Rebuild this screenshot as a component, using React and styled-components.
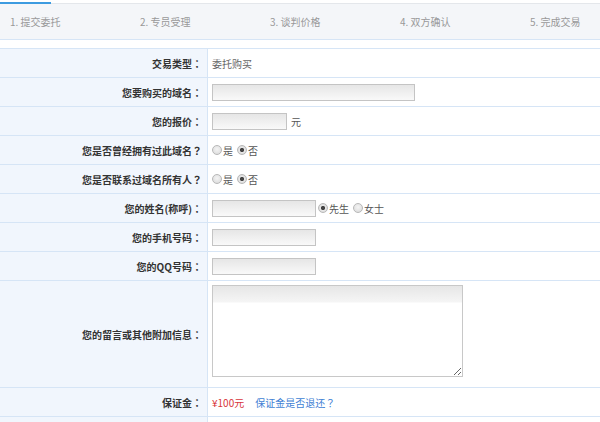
import React from "react";
import styled, { createGlobalStyle } from "styled-components";

const Global = createGlobalStyle`
  html, body { margin: 0; padding: 0; background: #fff; }
  body {
    font-family: "Noto Sans CJK SC", "Microsoft YaHei", sans-serif;
    font-size: 10px;
    color: #333;
    width: 600px;
    overflow: hidden;
  }
`;

const StepBar = styled.div`
  position: relative;
  margin-top: 3px;
  border-top: 1px solid #e4e7eb;
  border-bottom: 1px solid #d6e5f6;
  background: #f4f6f9;
  height: 35px;
  display: flex;
  align-items: center;
`;

const Step = styled.div`
  position: relative;
  width: 130px;
  flex: none;
  padding-left: 10px;
  box-sizing: border-box;
  color: #999;
  font-size: 10px;
  line-height: 14px;
`;

const ActiveMark = styled.span`
  position: absolute;
  left: 0;
  top: -13px;
  width: 51px;
  height: 2px;
  background: #3d9be0;
`;

const Form = styled.div`
  margin-top: 8px;
  border-top: 1px solid #d6e5f6;
`;

const Row = styled.div`
  display: flex;
  height: ${(p) => p.$h || 28}px;
  border-bottom: 1px solid #d6e5f6;
`;

const Label = styled.div`
  width: 208px;
  flex: none;
  box-sizing: border-box;
  background: #f1f6fd;
  border-right: 1px solid #d6e5f6;
  display: flex;
  align-items: center;
  justify-content: flex-end;
  padding-right: 5px;
  font-weight: bold;
  color: #333;
  font-size: 10px;
`;

const Punct = styled.span`
  font-family: "Noto Sans CJK TC", "Noto Sans CJK SC", sans-serif;
`;

const Value = styled.div`
  flex: 1;
  display: flex;
  align-items: ${(p) => (p.$top ? "flex-start" : "center")};
  padding-left: 4px;
  padding-top: ${(p) => (p.$top ? 4 : 0)}px;
  color: #666;
  font-size: 10px;
`;

const Input = styled.input`
  width: ${(p) => p.$w}px;
  height: 17px;
  box-sizing: border-box;
  border: 1px solid #c4c4c4;
  background: linear-gradient(#e6e6e6, #f9f9f9);
  margin: 0;
  padding: 0 3px;
  outline: none;
  font-family: inherit;
  font-size: 10px;
`;

const TextArea = styled.textarea`
  width: 251px;
  height: 92px;
  box-sizing: border-box;
  border: 1px solid #c8c8c8;
  background: linear-gradient(#e6e6e6, #f5f5f5 16px, #fff 17px, #fff);
  margin: 0;
  padding: 2px;
  outline: none;
  font-family: inherit;
  font-size: 10px;
  resize: both;
`;

const Unit = styled.span`
  margin-left: 4px;
  color: #555;
`;

const RadioGroup = styled.label`
  display: inline-flex;
  align-items: center;
  margin-right: ${(p) => p.$gap ?? 4}px;
  margin-left: ${(p) => p.$ml ?? 0}px;
  color: #555;
`;

const Radio = styled.input.attrs({ type: "radio" })`
  appearance: none;
  -webkit-appearance: none;
  width: 10px;
  height: 10px;
  margin: 0 1px 0 0;
  border-radius: 50%;
  border: 1px solid #b8b8b8;
  background: radial-gradient(circle at 50% 40%, #f4f4f4, #d8d8d8);
  box-sizing: border-box;
  &:checked {
    background: radial-gradient(circle, #444 0 1.8px, #e8e8e8 2.4px, #d2d2d2);
  }
`;

const Price = styled.span`
  color: #d8363b;
  margin-right: 11px;
`;

const Link = styled.a`
  color: #3f7fd4;
  text-decoration: none;
`;

const steps = ["1. 提交委托", "2. 专员受理", "3. 谈判价格", "4. 双方确认", "5. 完成交易"];

function YesNo({ name }) {
  return (
    <>
      <RadioGroup>
        <Radio name={name} />是
      </RadioGroup>
      <RadioGroup>
        <Radio name={name} defaultChecked />否
      </RadioGroup>
    </>
  );
}

function L({ text, p = "：" }) {
  return (
    <Label>
      {text}
      <Punct>{p}</Punct>
    </Label>
  );
}

export default function App() {
  return (
    <>
      <Global />
      <StepBar>
        {steps.map((s, i) => (
          <Step key={s}>
            {i === 0 && <ActiveMark />}
            {s}
          </Step>
        ))}
      </StepBar>
      <Form>
        <Row>
          <L text="交易类型" />
          <Value>委托购买</Value>
        </Row>
        <Row>
          <L text="您要购买的域名" />
          <Value>
            <Input $w={203} />
          </Value>
        </Row>
        <Row>
          <L text="您的报价" />
          <Value>
            <Input $w={75} />
            <Unit>元</Unit>
          </Value>
        </Row>
        <Row>
          <L text="您是否曾经拥有过此域名" p="？" />
          <Value>
            <YesNo name="owned" />
          </Value>
        </Row>
        <Row>
          <L text="您是否联系过域名所有人" p="？" />
          <Value>
            <YesNo name="contacted" />
          </Value>
        </Row>
        <Row>
          <L text="您的姓名(称呼)" />
          <Value>
            <Input $w={104} />
            <RadioGroup $ml={2}>
              <Radio name="sex" defaultChecked />先生
            </RadioGroup>
            <RadioGroup>
              <Radio name="sex" />女士
            </RadioGroup>
          </Value>
        </Row>
        <Row>
          <L text="您的手机号码" />
          <Value>
            <Input $w={104} />
          </Value>
        </Row>
        <Row>
          <L text="您的QQ号码" />
          <Value>
            <Input $w={104} />
          </Value>
        </Row>
        <Row $h={106}>
          <L text="您的留言或其他附加信息" />
          <Value $top>
            <TextArea />
          </Value>
        </Row>
        <Row>
          <L text="保证金" />
          <Value>
            <Price>¥100元</Price>
            <Link href="#">
              保证金是否退还<Punct>？</Punct>
            </Link>
          </Value>
        </Row>
        <Row>
          <Label />
          <Value />
        </Row>
      </Form>
    </>
  );
}
